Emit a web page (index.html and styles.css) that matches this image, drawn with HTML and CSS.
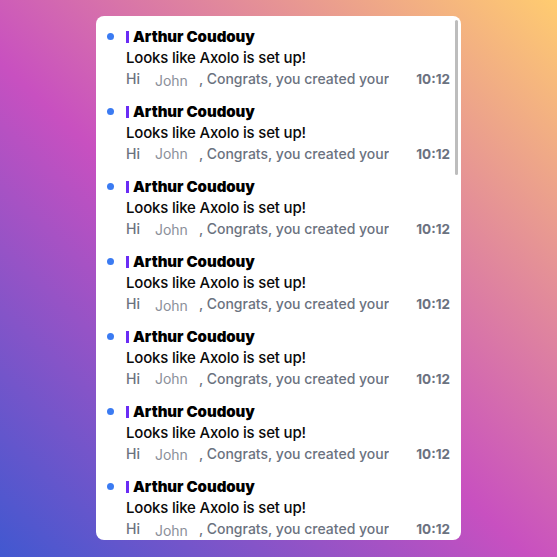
FILE: index.html
```html
<!DOCTYPE html>
<html>
<head>
<meta charset="utf-8">
<link rel="stylesheet" href="styles.css">
</head>
<body>
<div class="stage">
  <div class="card">
    <div class="list">
      <div class="row"><span class="dot"></span><div class="body"><div class="from"><span class="tag"></span>Arthur Coudouy</div><div class="subject">Looks like Axolo is set up!</div><div class="line"><span class="preview">Hi<span class="var">John</span>, Congrats, you created your</span><span class="time">10:12</span></div></div></div>
      <div class="row"><span class="dot"></span><div class="body"><div class="from"><span class="tag"></span>Arthur Coudouy</div><div class="subject">Looks like Axolo is set up!</div><div class="line"><span class="preview">Hi<span class="var">John</span>, Congrats, you created your</span><span class="time">10:12</span></div></div></div>
      <div class="row"><span class="dot"></span><div class="body"><div class="from"><span class="tag"></span>Arthur Coudouy</div><div class="subject">Looks like Axolo is set up!</div><div class="line"><span class="preview">Hi<span class="var">John</span>, Congrats, you created your</span><span class="time">10:12</span></div></div></div>
      <div class="row"><span class="dot"></span><div class="body"><div class="from"><span class="tag"></span>Arthur Coudouy</div><div class="subject">Looks like Axolo is set up!</div><div class="line"><span class="preview">Hi<span class="var">John</span>, Congrats, you created your</span><span class="time">10:12</span></div></div></div>
      <div class="row"><span class="dot"></span><div class="body"><div class="from"><span class="tag"></span>Arthur Coudouy</div><div class="subject">Looks like Axolo is set up!</div><div class="line"><span class="preview">Hi<span class="var">John</span>, Congrats, you created your</span><span class="time">10:12</span></div></div></div>
      <div class="row"><span class="dot"></span><div class="body"><div class="from"><span class="tag"></span>Arthur Coudouy</div><div class="subject">Looks like Axolo is set up!</div><div class="line"><span class="preview">Hi<span class="var">John</span>, Congrats, you created your</span><span class="time">10:12</span></div></div></div>
      <div class="row"><span class="dot"></span><div class="body"><div class="from"><span class="tag"></span>Arthur Coudouy</div><div class="subject">Looks like Axolo is set up!</div><div class="line"><span class="preview">Hi<span class="var">John</span>, Congrats, you created your</span><span class="time">10:12</span></div></div></div>
    </div>
    <div class="scrollbar"></div>
  </div>
</div>
</body>
</html>
```

FILE: styles.css
```css
html, body {
  margin: 0;
  padding: 0;
  height: 100%;
}

body {
  font-family: Inter, "Noto Sans", "Liberation Sans", sans-serif;
}

.stage {
  width: 557px;
  height: 557px;
  box-sizing: border-box;
  padding: 16px 96px 17px 96px;
  background: linear-gradient(43deg, #4158d0 0%, #c850c0 46%, #ffcc70 100%);
}

.card {
  position: relative;
  width: 365px;
  height: 524px;
  background: #fff;
  border-radius: 8px;
  overflow: hidden;
}

.list {
  box-sizing: border-box;
  padding: 4px 11px 0 0;
}

.scrollbar {
  position: absolute;
  top: 4px;
  right: 3px;
  width: 3px;
  height: 155px;
  border-radius: 2px;
  background: #bdbdbd;
}

.row {
  display: grid;
  grid-template-columns: 30px 1fr;
  padding: 6px 0 6px 0;
}

.dot {
  width: 7px;
  height: 7px;
  border-radius: 50%;
  background: #3b7bf2;
  margin: 7px 0 0 11px;
}

.body {
  display: flex;
  flex-direction: column;
  min-width: 0;
}

.from {
  display: flex;
  align-items: center;
  height: 21px;
  font-size: 15px;
  font-weight: 900;
  color: #000;
  letter-spacing: -0.05px;
}

.tag {
  width: 3px;
  height: 12px;
  background: #6a2cf5;
  margin-right: 4px;
}

.subject {
  height: 21px;
  line-height: 21px;
  font-size: 15px;
  font-weight: 500;
  color: #0a0a0a;
  letter-spacing: -0.18px;
}

.line {
  display: flex;
  align-items: baseline;
  justify-content: space-between;
  height: 21px;
  line-height: 21px;
}

.preview {
  font-size: 14px;
  font-weight: 500;
  color: #6b7280;
  white-space: nowrap;
  overflow: hidden;
}

.var {
  display: inline-block;
  padding: 0 11px 0 15px;
  font-weight: 400;
  color: #8b909a;
}

.row:nth-child(3n+1) .var {
  vertical-align: -2px;
}

.row:nth-child(3n) .var {
  vertical-align: -1px;
}

.time {
  font-size: 13.5px;
  font-weight: 700;
  color: #6b7280;
}
```
